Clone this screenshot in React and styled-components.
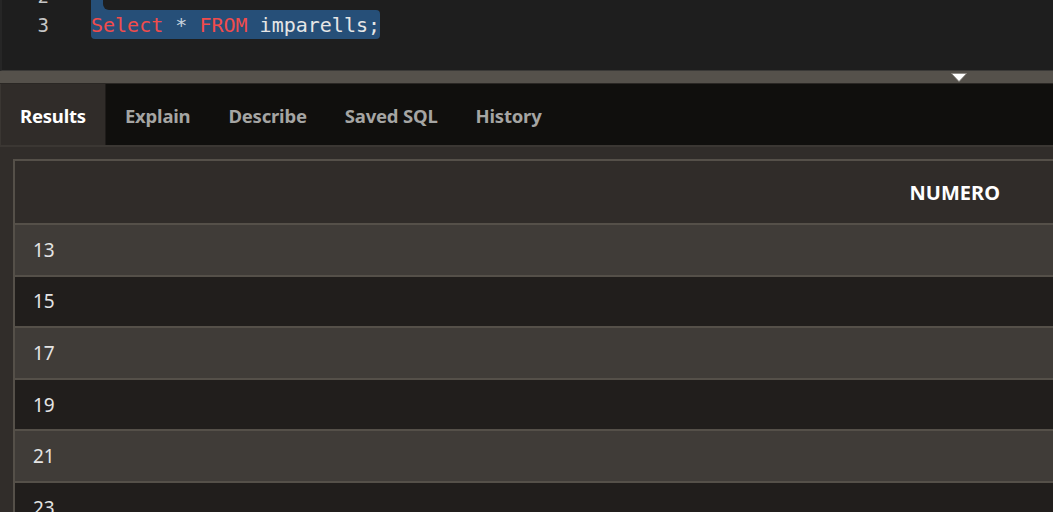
import React from "react";
import styled, { createGlobalStyle } from "styled-components";

const Global = createGlobalStyle`
  html, body { margin: 0; padding: 0; background: #312d2a; overflow: hidden; }
  * { box-sizing: border-box; }
`;

const Page = styled.div`
  width: 1053px;
  height: 512px;
  display: flex;
  flex-direction: column;
  background: #312d2a;
  overflow: hidden;
  font-family: "Noto Sans", "Open Sans", sans-serif;
`;

const Editor = styled.div`
  height: 71px;
  flex: none;
  background: #1e1e1e;
  border-left: 2px solid #262626;
  border-bottom: 1px solid #3a3937;
  overflow: hidden;
`;

const CodeScroll = styled.div`
  margin-top: -19px;
  display: flex;
  flex-direction: column;
`;

const CodeLine = styled.div`
  display: flex;
  height: 29px;
  align-items: center;
  font-family: "DejaVu Sans Mono", "Liberation Mono", monospace;
  font-size: 20px;
  white-space: pre;
`;

const Gutter = styled.div`
  width: 47px;
  text-align: right;
  color: #c6c6c6;
  font-size: 19px;
  flex: none;
`;

const Code = styled.div`
  margin-left: 42px;
  height: 100%;
  display: flex;
  align-items: stretch;
`;

const Sel = styled.span`
  display: inline-flex;
  align-items: center;
  height: 29px;
  background: #264f78;
  border-radius: ${(p) => p.$radius || "0"};
  width: ${(p) => (p.$w ? `${p.$w}px` : "auto")};
`;

const Unselected = styled.span`
  align-self: stretch;
  flex: 1;
  margin-left: 12px;
  background: #1e1e1e;
  border-bottom-left-radius: 6px;
`;

const Kw = styled.span`
  color: #f14c4c;
`;
const Op = styled.span`
  color: #c8d3de;
`;
const Id = styled.span`
  color: #e6e6e6;
`;

const Splitter = styled.div`
  height: 13px;
  flex: none;
  background: #55514b;
  border-bottom: 1px solid #2a2724;
  display: flex;
  justify-content: flex-end;
  padding-right: 86px;
  padding-top: 2px;
`;

const Tabs = styled.div`
  height: 63px;
  flex: none;
  display: flex;
  background: #100f0d;
  border-bottom: 2px solid #3b3733;
`;

const Tab = styled.div`
  display: flex;
  align-items: center;
  padding: 2px 19px 0;
  font-size: 18.5px;
  font-weight: 700;
  letter-spacing: -0.2px;
  color: ${(p) => (p.$active ? "#ffffff" : "#a5a5a3")};
  background: ${(p) => (p.$active ? "#302c29" : "transparent")};
  border-right: ${(p) => (p.$active ? "1px solid #1f1c1a" : "none")};
  border-left: ${(p) => (p.$active ? "1px solid #3a3632" : "none")};
`;

const Content = styled.div`
  flex: 1;
  padding: 12px 0 0 13px;
  overflow: hidden;
`;

const Table = styled.div`
  border-left: 2px solid #555049;
  border-top: 2px solid #555049;
  display: flex;
  flex-direction: column;
`;

const HeadRow = styled.div`
  height: 62px;
  background: #302c29;
  display: flex;
  align-items: center;
  justify-content: flex-end;
  padding-right: 53px;
  font-size: 20px;
  font-weight: 700;
  color: #ffffff;
`;

const Row = styled.div`
  height: 51.6px;
  flex: none;
  border-top: 2px solid #555049;
  background: ${(p) => (p.$odd ? "#403c38" : "#211e1c")};
  display: flex;
  align-items: center;
  padding-left: 18px;
  font-size: 19px;
  color: #e4e4e4;
`;

const Triangle = () => (
  <svg width="16" height="9" viewBox="0 0 16 9">
    <path d="M0.5 0.5 H15.5 L8 8.5 Z" fill="#ffffff" stroke="#8a8680" strokeWidth="0.8" />
  </svg>
);

const rows = [13, 15, 17, 19, 21, 23];
const tabs = ["Results", "Explain", "Describe", "Saved SQL", "History"];

export default function App() {
  return (
    <Page>
      <Global />
      <Editor>
        <CodeScroll>
          <CodeLine>
            <Gutter>2</Gutter>
            <Code>
              <Sel $w={960}>
                <Unselected />
              </Sel>
            </Code>
          </CodeLine>
          <CodeLine>
            <Gutter>3</Gutter>
            <Code>
              <Sel $radius="0 4px 4px 4px">
                <Kw>Select</Kw>
                <Op> * </Op>
                <Kw>FROM</Kw>
                <Id> imparells;</Id>
              </Sel>
            </Code>
          </CodeLine>
        </CodeScroll>
      </Editor>
      <Splitter>
        <Triangle />
      </Splitter>
      <Tabs>
        {tabs.map((t, i) => (
          <Tab key={t} $active={i === 0}>
            {t}
          </Tab>
        ))}
      </Tabs>
      <Content>
        <Table>
          <HeadRow>NUMERO</HeadRow>
          {rows.map((n, i) => (
            <Row key={n} $odd={i % 2 === 0}>
              {n}
            </Row>
          ))}
        </Table>
      </Content>
    </Page>
  );
}
